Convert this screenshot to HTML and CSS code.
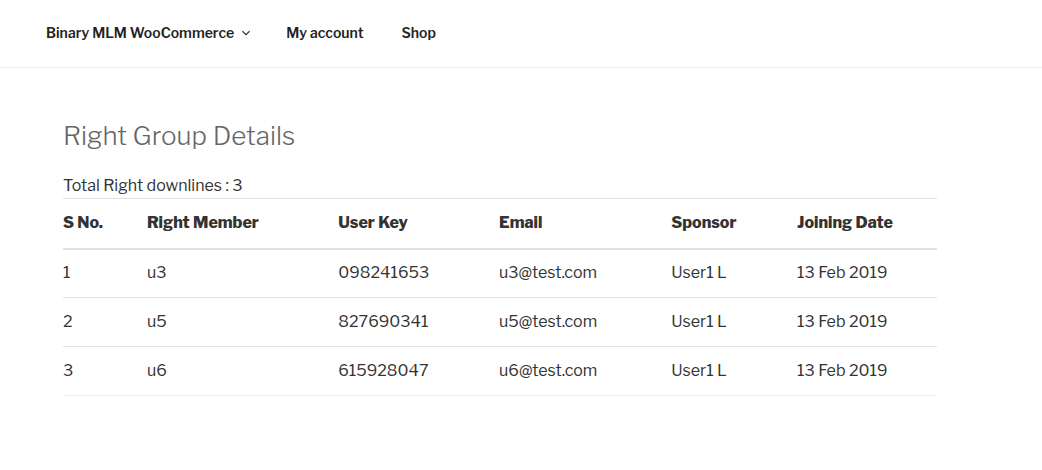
FILE: index.html
```
<!DOCTYPE html>
<html lang="en">
<head>
<meta charset="utf-8">
<meta name="viewport" content="width=device-width, initial-scale=1">
<title>Right Group Details</title>
<link rel="stylesheet" href="styles.css">
</head>
<body>
<nav class="site-nav" aria-label="Main">
  <ul class="menu">
    <li><a class="menu-link" href="#">Binary MLM WooCommerce<svg class="chevron" viewBox="0 0 8 6" aria-hidden="true"><path d="M0.4 1.2L4 4.7l3.6-3.5" fill="none" stroke="currentColor" stroke-width="1.1"/></svg></a></li>
    <li><a class="menu-link" href="#">My account</a></li>
    <li><a class="menu-link" href="#">Shop</a></li>
  </ul>
</nav>
<main class="content">
  <h1 class="title">Right Group Details</h1>
  <p class="total">Total Right downlines : 3</p>
  <table class="members">
    <colgroup><col class="col-no"><col class="col-member"><col class="col-key"><col class="col-email"><col class="col-sponsor"><col class="col-date"></colgroup>
    <thead>
      <tr><th scope="col">S No.</th><th scope="col">Right Member</th><th scope="col">User Key</th><th scope="col">Email</th><th scope="col">Sponsor</th><th scope="col">Joining Date</th></tr>
    </thead>
    <tbody>
      <tr><td>1</td><td>u3</td><td>098241653</td><td>u3@test.com</td><td>User1 L</td><td>13 Feb 2019</td></tr>
      <tr><td>2</td><td>u5</td><td>827690341</td><td>u5@test.com</td><td>User1 L</td><td>13 Feb 2019</td></tr>
      <tr><td>3</td><td>u6</td><td>615928047</td><td>u6@test.com</td><td>User1 L</td><td>13 Feb 2019</td></tr>
    </tbody>
  </table>
</main>
</body>
</html>
```
FILE: styles.css
```
* { box-sizing: border-box; }
body {
  margin: 0;
  background: #fff;
  color: #333;
  font: 16px/24px "Libre Franklin", "Open Sans", "Liberation Sans", sans-serif;
}
.site-nav {
  padding: 21px 46px 22px;
  border-bottom: 1px solid #eee;
}
.menu {
  display: flex;
  gap: 38px;
  margin: 0;
  padding: 0;
  list-style: none;
}
.menu-link {
  display: flex;
  align-items: center;
  gap: 8px;
  color: #222;
  font-size: 14px;
  font-weight: 600;
  text-decoration: none;
  white-space: nowrap;
}
.chevron { width: 8px; height: 6px; margin-right: -2px; }
.content { padding: 50px 105px 0 63px; }
.title {
  margin: 0 0 20px;
  color: #666;
  font-size: 26px;
  font-weight: 300;
  line-height: 36px;
}
.total { margin: 0; }
.members {
  width: 100%;
  table-layout: fixed;
  border-collapse: collapse;
}
.members th, .members td {
  height: 49px;
  padding: 0 12px 0 0;
  border-top: 1px solid #dee2e6;
  text-align: left;
  white-space: nowrap;
}
.members th { height: 50px; border-bottom: 2px solid #dee2e6; font-weight: 800; }
.members tbody tr:last-child td { border-bottom: 1px solid #eee; }
.col-no { width: 9.6%; }
.col-member { width: 21.9%; }
.col-key { width: 18.4%; }
.col-email { width: 19.7%; }
.col-sponsor { width: 14.4%; }
.col-date { width: 16%; }
```
